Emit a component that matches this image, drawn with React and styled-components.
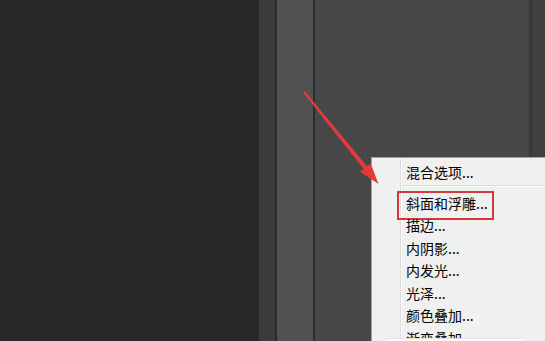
import React from "react"
import styled, { createGlobalStyle } from "styled-components"

const items = [
  { label: "斜面和浮雕...", marked: true },
  { label: "描边..." },
  { label: "内阴影..." },
  { label: "内发光..." },
  { label: "光泽..." },
  { label: "颜色叠加..." },
  { label: "渐变叠加..." },
]

const App = () => {
  return (
    <>
      <GlobalStyle />
      <Screen>
        <Panel width="259px" bg="#292929" />
        <Panel width="16px" bg="#3b3b3b" />
        <Divider width="2px" />
        <Panel width="36px" bg="#515151" />
        <Divider width="2px" />
        <Panel width="214px" bg="#474747" />
        <Divider width="3px" color="#393939" />
        <Panel grow bg="#404040" />

        <ContextMenu>
          <Gutter />
          <List>
            <Item>混合选项...</Item>
            <Separator />
            {items.map((item) => (
              <Item key={item.label}>
                <Label marked={item.marked}>{item.label}</Label>
              </Item>
            ))}
          </List>
        </ContextMenu>

        <Tip />

        <Arrow viewBox="0 0 545 341">
          <polygon
            points="304.8,91.3 367.3,166.4 370.6,163.2 378.5,184 360,171.7 363.6,168.9 303.2,92.6"
            fill="#e53a3d"
          />
        </Arrow>
      </Screen>
    </>
  )
}

export default App

const GlobalStyle = createGlobalStyle`
  body {
    margin: 0;
    overflow: hidden;
    font-family: "Noto Sans CJK SC", "Liberation Sans", sans-serif;
  }
`

const Screen = styled.div`
  position: relative;
  display: flex;
  width: 545px;
  height: 341px;
  overflow: hidden;
`

const Panel = styled.div`
  flex: ${(p) => (p.grow ? "1" : "none")};
  width: ${(p) => p.width || "auto"};
  background: ${(p) => p.bg};
`

const Divider = styled.div`
  flex: none;
  width: ${(p) => p.width};
  background: ${(p) => p.color || "#2c2c2c"};
`

const ContextMenu = styled.div`
  position: absolute;
  left: 371px;
  top: 157px;
  width: 200px;
  height: 200px;
  display: flex;
  background: #f0f0f0;
  border: 1px solid #a3a3a3;
  box-sizing: border-box;
`

const Gutter = styled.div`
  width: 28px;
  border-right: 1px solid #dcdcdc;
  box-shadow: 1px 0 0 #ffffff;
`

const List = styled.div`
  flex: 1;
  padding-top: 2.5px;
`

const Item = styled.div`
  height: 22.5px;
  line-height: 22.5px;
  padding-left: 5px;
  font-size: 14px;
  color: #000000;
  white-space: nowrap;
`

const Label = styled.span`
  position: relative;

  &::after {
    content: "";
    display: ${(p) => (p.marked ? "block" : "none")};
    position: absolute;
    left: -9px;
    top: -1.5px;
    width: 97px;
    height: 28.5px;
    box-sizing: border-box;
    border: 2.5px solid #cf3a3e;
  }
`

const Separator = styled.div`
  height: 1px;
  margin: 2px 0 4.5px 1px;
  background: #dcdcdc;
  border-bottom: 1px solid #ffffff;
`

const Tip = styled.div`
  position: absolute;
  left: 387px;
  top: 338px;
  width: 135px;
  height: 10px;
  background: #fbfbfb;
  border-top: 1px solid #e4e4e4;
`

const Arrow = styled.svg`
  position: absolute;
  left: 0;
  top: 0;
  width: 545px;
  height: 341px;
  pointer-events: none;
`
